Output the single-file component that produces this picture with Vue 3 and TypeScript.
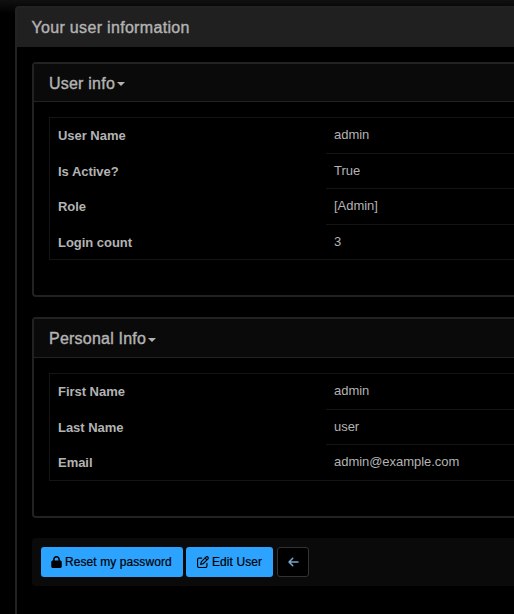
<script setup lang="ts">
interface Row {
  label: string
  value: string
}
interface Section {
  title: string
  kind: string
  rows: Row[]
}

const sections: Section[] = [
  {
    title: 'User info',
    kind: 'account',
    rows: [
      { label: 'User Name', value: 'admin' },
      { label: 'Is Active?', value: 'True' },
      { label: 'Role', value: '[Admin]' },
      { label: 'Login count', value: '3' },
    ],
  },
  {
    title: 'Personal Info',
    kind: 'personal',
    rows: [
      { label: 'First Name', value: 'admin' },
      { label: 'Last Name', value: 'user' },
      { label: 'Email', value: 'admin@example.com' },
    ],
  },
]
</script>

<template>
  <div class="page">
    <main class="card">
      <header class="card-header"><span class="heading main-heading">Your user information</span></header>
      <div class="card-body">
        <section v-for="s in sections" :key="s.kind" class="panel" :class="s.kind">
          <header class="panel-header">
            <span class="heading">{{ s.title }}</span><i class="caret"></i>
          </header>
          <div class="panel-body">
            <dl class="table">
              <div v-for="r in s.rows" :key="r.label" class="row">
                <dt><span>{{ r.label }}</span></dt>
                <dd><span>{{ r.value }}</span></dd>
              </div>
            </dl>
          </div>
        </section>
        <div class="well">
          <button class="btn primary reset" type="button">
            <svg class="lock" viewBox="0 0 448 512"><path d="M144 144v48h160v-48c0-44-36-80-80-80s-80 36-80 80zM80 192v-48C80 64 144 0 224 0s144 64 144 144v48h16c35 0 64 29 64 64v192c0 35-29 64-64 64H64c-35 0-64-29-64-64V256c0-35 29-64 64-64h16z" /></svg>
            <span>Reset my password</span>
          </button>
          <button class="btn primary edit" type="button">
            <svg class="pen" viewBox="0 0 512 512"><path d="M441 58.900L453.100 71c9.400 9.400 9.400 24.600 0 33.900L424 134.100 377.900 88 407 58.900c9.400-9.400 24.600-9.400 34 0zM209.800 256.200L344 121.900 390.100 168 255.800 302.200c-2.900 2.900-6.500 5-10.400 6.100l-58.500 16.700 16.700-58.500c1.100-3.900 3.200-7.500 6.200-10.300zM373.100 25L175.800 222.200c-8.700 8.700-15 19.400-18.300 31.100l-28.600 100c-2.400 8.400-.1 17.400 6.100 23.600s15.200 8.500 23.600 6.100l100-28.600c11.800-3.400 22.500-9.700 31.100-18.300L487 138.900c28.100-28.100 28.100-73.700 0-101.800L474.900 25C446.800-3.100 401.200-3.100 373.100 25zM88 64C39.400 64 0 103.400 0 152v272c0 48.600 39.400 88 88 88h272c48.600 0 88-39.400 88-88V312c0-13.300-10.700-24-24-24s-24 10.700-24 24v112c0 22.100-17.900 40-40 40H88c-22.100 0-40-17.900-40-40V152c0-22.100 17.900-40 40-40h112c13.300 0 24-10.700 24-24s-10.700-24-24-24H88z" /></svg>
            <span>Edit User</span>
          </button>
          <button class="btn back" type="button" aria-label="Back">
            <svg class="arrow" viewBox="0 0 448 512"><path d="M9.400 233.400c-12.500 12.500-12.500 32.800 0 45.300l160 160c12.500 12.500 32.800 12.500 45.300 0s12.500-32.800 0-45.300L109.200 288H416c17.700 0 32-14.300 32-32s-14.300-32-32-32H109.300l105.400-105.400c12.500-12.500 12.500-32.800 0-45.300s-32.800-12.500-45.300 0l-160 160z" /></svg>
          </button>
        </div>
      </div>
    </main>
  </div>
</template>

<style>
body {
  background: #000;
  overflow: hidden;
}
</style>

<style scoped>
.page {
  box-sizing: border-box;
  height: 614px;
  overflow: hidden;
  padding: 6px 0 0 15px;
  background: linear-gradient(#101010, #000 14px);
  color: #b3b3b3;
  font-family: 'Liberation Sans', Arial, sans-serif;
  font-size: 13px;
}
.card {
  box-sizing: border-box;
  width: 520px;
  height: 640px;
  border: 2px solid #222;
  border-radius: 4px;
  background: #000;
}
.card-header {
  display: flex;
  align-items: center;
  box-sizing: border-box;
  height: 39px;
  padding: 0 15px 0 14.500px;
  background: #202020;
}
.heading {
  font-size: 16px;
  line-height: 18px;
  letter-spacing: 0.220px;
  -webkit-text-stroke: 0.400px currentColor;
  white-space: nowrap;
}
.main-heading {
  letter-spacing: 0.320px;
}
.card-body {
  padding: 15px 0 0 15px;
}
.panel {
  box-sizing: border-box;
  height: 235px;
  margin-bottom: 20px;
  border: 2px solid #222;
  border-radius: 4px;
}
.personal {
  height: 201px;
}
.panel-header {
  display: flex;
  align-items: center;
  box-sizing: border-box;
  height: 38px;
  padding: 2px 0 0 15px;
  border-bottom: 1px solid #222;
  background: #0a0a0a;
}
.personal .panel-header {
  height: 39px;
}
.caret {
  margin: 1px 0 0 2px;
  border-top: 4px solid #b3b3b3;
  border-left: 4px solid transparent;
  border-right: 4px solid transparent;
}
.panel-body {
  padding: 15px 0 0 15px;
}
.table {
  margin: 0;
  border: solid #141414;
  border-width: 1px 0 1px 1px;
}
.row {
  display: grid;
  grid-template-columns: 276px 1fr;
  height: 35px;
}
.row:nth-child(3) {
  height: 36px;
}
dt,
dd {
  box-sizing: border-box;
  margin: 0;
  padding: 9px 8px 0;
  line-height: 18px;
}
dt {
  font-weight: bold;
  letter-spacing: -0.030px;
}
.row + .row dt {
  padding-top: 10px;
}
dd {
  padding-top: 8px;
  letter-spacing: -0.040px;
}
.row + .row dd {
  border-top: 1px solid #141414;
}
.well {
  display: flex;
  box-sizing: border-box;
  height: 48px;
  padding: 9px;
  border-radius: 4px;
  background: #0a0a0a;
}
.btn {
  display: flex;
  align-items: center;
  box-sizing: border-box;
  height: 30px;
  padding: 0 10px;
  border: 0;
  border-radius: 3px;
  font: 12px/18px 'Liberation Sans', Arial, sans-serif;
  letter-spacing: 0.080px;
  white-space: nowrap;
}
.primary {
  background: #2ba3ff;
  color: #000;
  -webkit-text-stroke: 0.200px currentColor;
}
.btn svg {
  flex: none;
  height: 12px;
  fill: currentColor;
  stroke: none;
}
.reset {
  width: 142px;
}
.edit {
  width: 87px;
  margin-left: 3px;
  padding-left: 11px;
}
.lock {
  width: 11px;
  margin-right: 3px;
}
.pen {
  width: 12px;
  margin-right: 3px;
}
.back {
  justify-content: center;
  width: 32px;
  margin-left: 4px;
  border: 1px solid #333;
  background: #000;
  color: #77a7c9;
}
.arrow {
  width: 11px;
}
</style>
